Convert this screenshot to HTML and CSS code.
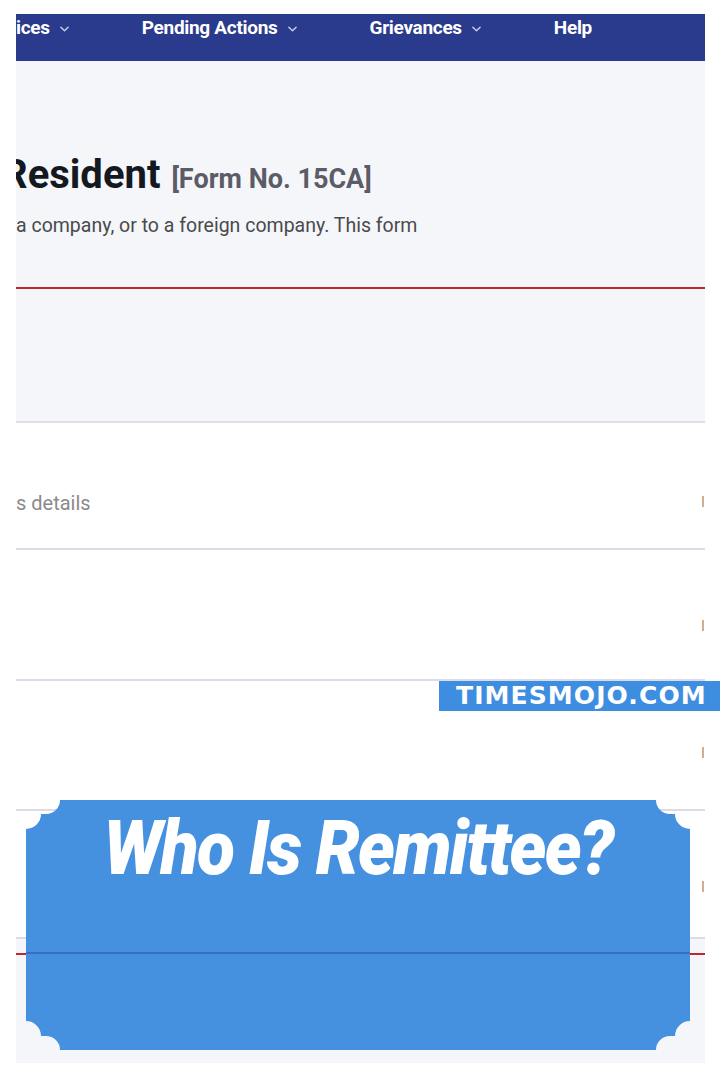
FILE: index.html
```html
<!DOCTYPE html>
<html lang="en">
<head>
<meta charset="utf-8">
<title>Who Is Remittee?</title>
<link rel="stylesheet" href="styles.css">
</head>
<body>
<div class="page">
  <nav class="nav">
    <span class="nav-item">ices <svg class="chev" viewBox="0 0 10 6" width="9" height="6"><path d="M1 1l4 4 4-4" fill="none" stroke="#c9cde6" stroke-width="1.6" stroke-linecap="round" stroke-linejoin="round"/></svg></span>
    <span class="nav-item">Pending Actions <svg class="chev" viewBox="0 0 10 6" width="9" height="6"><path d="M1 1l4 4 4-4" fill="none" stroke="#c9cde6" stroke-width="1.6" stroke-linecap="round" stroke-linejoin="round"/></svg></span>
    <span class="nav-item">Grievances <svg class="chev" viewBox="0 0 10 6" width="9" height="6"><path d="M1 1l4 4 4-4" fill="none" stroke="#c9cde6" stroke-width="1.6" stroke-linecap="round" stroke-linejoin="round"/></svg></span>
    <span class="nav-item">Help</span>
  </nav>
  <header class="hero">
    <h1 class="title"><span class="title-main">Resident</span> <span class="title-form">[Form No. 15CA]</span></h1>
    <p class="lead">a company, or to a foreign company. This form</p>
    <div class="hero-rule"></div>
  </header>
  <section class="rows">
    <div class="row row-1"><span class="row-text">s details</span><span class="tick"></span></div>
    <div class="row row-2"><span class="row-text"></span><span class="tick"></span></div>
    <div class="row row-3"><span class="row-text"></span><span class="tick"></span></div>
    <div class="row row-4"><span class="row-text"></span><span class="tick"></span></div>
  </section>
  <footer class="foot"><div class="foot-rule"></div></footer>
</div>

<div class="badge">TIMESMOJO.COM</div>

<div class="ticket">
  <svg class="ticket-bg" viewBox="0 0 664 250" width="664" height="250" aria-hidden="true">
    <path d="M0 29 A15 15 0 0 0 15 14 L20 14 A14 14 0 0 0 34 0 H630 A14 14 0 0 0 644 14 L649 14 A15 15 0 0 0 664 29 V221 A15 15 0 0 0 649 236 L644 236 A14 14 0 0 0 630 250 H34 A14 14 0 0 0 20 236 L15 236 A15 15 0 0 0 0 221 Z" fill="#4690e0"/>
    <rect x="0" y="152" width="664" height="2" fill="#3a6cc2"/>
  </svg>
  <div class="ticket-text">Who Is Remittee?</div>
</div>
</body>
</html>
```

FILE: styles.css
```css
html, body {
  margin: 0;
  padding: 0;
  background: #ffffff;
}

body {
  width: 720px;
  height: 1080px;
  position: relative;
  overflow: hidden;
  font-family: Roboto, "Liberation Sans", Arial, sans-serif;
}

.page {
  margin: 14px 15px 0 16px;
  width: 689px;
  overflow: hidden;
}

/* nav */
.nav {
  height: 47px;
  background: #2a3a8c;
  display: flex;
  align-items: flex-start;
  gap: 73px;
  padding-top: 3px;
  box-sizing: border-box;
  white-space: nowrap;
}

.nav-item {
  color: #ffffff;
  font-weight: 700;
  font-size: 19px;
  line-height: 22px;
  letter-spacing: -0.3px;
  display: flex;
  align-items: center;
  gap: 10px;
}

.chev {
  margin-top: 2px;
}

/* hero */
.hero {
  background: #f5f6fa;
  padding-top: 92px;
  height: 362px;
  box-sizing: border-box;
  border-bottom: 2px solid #dfdfe8;
}

.title {
  margin: 0 0 0 -14px;
  font-size: 40px;
  line-height: 44px;
  font-weight: 700;
  color: #141820;
  white-space: nowrap;
}

.title-form {
  font-size: 27px;
  color: #5c5c66;
  font-weight: 700;
  margin-left: 1px;
}

.lead {
  margin: 12px 0 0 0;
  font-size: 19.5px;
  line-height: 26px;
  color: #4a4a4a;
  white-space: nowrap;
}

.hero-rule {
  margin-top: 48px;
  height: 2px;
  background: #c4262e;
}

/* rows */
.row {
  box-sizing: border-box;
  border-bottom: 2px solid #dcdce8;
  display: flex;
  justify-content: space-between;
  align-items: flex-start;
  background: #ffffff;
}

.row-1 { height: 127px; padding-top: 67px; }
.row-2 { height: 131px; padding-top: 64px; }
.row-3 { height: 130px; padding-top: 60px; }
.row-4 { height: 128px; padding-top: 64px; }

.row-text {
  font-size: 20px;
  line-height: 26px;
  color: #8a8a8a;
  white-space: nowrap;
}

.tick {
  width: 2px;
  height: 11px;
  background: #cfae92;
  margin-top: 6px;
  margin-right: 1px;
}

/* footer */
.foot {
  background: #f5f6fa;
  height: 124px;
  padding-top: 14px;
  box-sizing: border-box;
}

.foot-rule {
  height: 2px;
  background: #c4262e;
}

/* overlays */
.badge {
  position: absolute;
  left: 439px;
  top: 681px;
  width: 281px;
  height: 30px;
  background: #3d8ee0;
  color: #ffffff;
  font-family: "DejaVu Sans", "Liberation Sans", sans-serif;
  font-weight: 700;
  font-size: 25px;
  line-height: 30px;
  padding-left: 17px;
  box-sizing: border-box;
  white-space: nowrap;
  letter-spacing: 1.1px;
}

.ticket {
  position: absolute;
  left: 26px;
  top: 800px;
  width: 664px;
  height: 250px;
}

.ticket-bg {
  display: block;
}

.ticket-text {
  position: absolute;
  left: 0;
  right: 0;
  top: 10px;
  text-align: center;
  color: #ffffff;
  font-family: Roboto, "Liberation Sans", sans-serif;
  font-weight: 900;
  font-style: italic;
  font-size: 76px;
  line-height: 76px;
  letter-spacing: -2px;
  transform: scaleX(0.92);
  white-space: nowrap;
}
```
